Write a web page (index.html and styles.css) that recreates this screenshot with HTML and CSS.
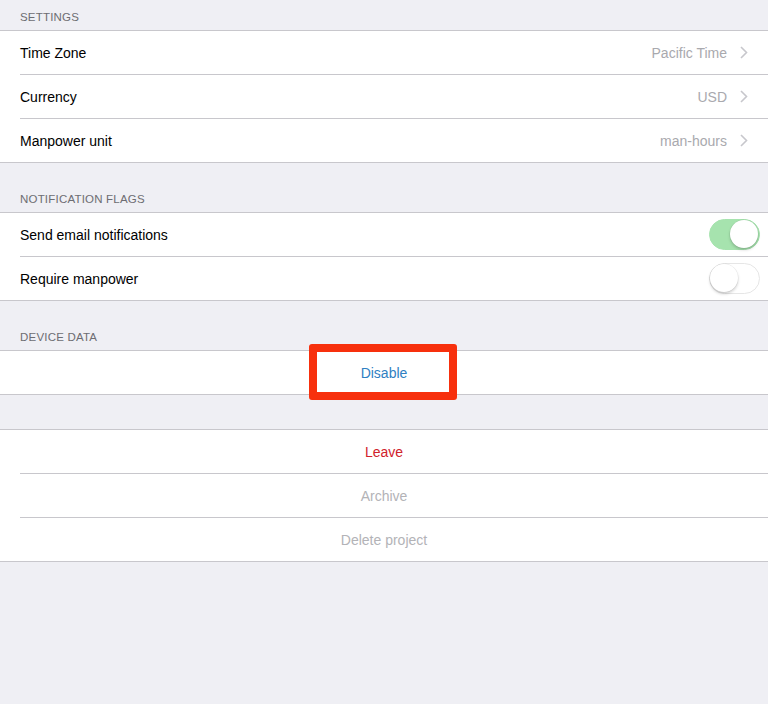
FILE: index.html
```html
<!DOCTYPE html>
<html>
<head>
<meta charset="utf-8">
<link rel="stylesheet" href="styles.css">
</head>
<body>
<div class="page">
  <div class="section-header first">Settings</div>
  <div class="group">
    <div class="row">
      <span class="label">Time Zone</span>
      <span class="detail">Pacific Time<svg class="chev" width="8" height="13" viewBox="0 0 8 13"><path d="M1 1l5.5 5.5L1 12" fill="none" stroke="#c7c7cc" stroke-width="1.6"/></svg></span>
    </div>
    <div class="sep"></div>
    <div class="row">
      <span class="label">Currency</span>
      <span class="detail">USD<svg class="chev" width="8" height="13" viewBox="0 0 8 13"><path d="M1 1l5.5 5.5L1 12" fill="none" stroke="#c7c7cc" stroke-width="1.6"/></svg></span>
    </div>
    <div class="sep"></div>
    <div class="row">
      <span class="label">Manpower unit</span>
      <span class="detail">man-hours<svg class="chev" width="8" height="13" viewBox="0 0 8 13"><path d="M1 1l5.5 5.5L1 12" fill="none" stroke="#c7c7cc" stroke-width="1.6"/></svg></span>
    </div>
  </div>

  <div class="section-header">Notification flags</div>
  <div class="group">
    <div class="row toggle-row">
      <span class="label">Send email notifications</span>
      <span class="switch on"><span class="knob"></span></span>
    </div>
    <div class="sep"></div>
    <div class="row toggle-row">
      <span class="label">Require manpower</span>
      <span class="switch"><span class="knob"></span></span>
    </div>
  </div>

  <div class="section-header">Device data</div>
  <div class="group">
    <div class="row center annotated">
      <span class="action blue">Disable</span>
      <span class="highlight"></span>
    </div>
  </div>

  <div class="spacer"></div>
  <div class="group">
    <div class="row center"><span class="action red">Leave</span></div>
    <div class="sep"></div>
    <div class="row center"><span class="action grey">Archive</span></div>
    <div class="sep"></div>
    <div class="row center"><span class="action grey">Delete project</span></div>
  </div>
</div>
</body>
</html>
```

FILE: styles.css
```css
html, body {
  margin: 0;
  padding: 0;
  background: #efeff4;
}
body {
  font-family: "Liberation Sans", Arial, sans-serif;
  width: 768px;
  height: 704px;
  overflow: hidden;
}
.page {
  display: flex;
  flex-direction: column;
}
.section-header {
  height: 30px;
  box-sizing: border-box;
  margin-top: 19px;
  padding: 0 20px 6px;
  display: flex;
  align-items: flex-end;
  font-size: 11.5px;
  letter-spacing: 0.2px;
  line-height: 13px;
  text-transform: uppercase;
  color: #6d6d72;
}
.section-header.first {
  margin-top: 0;
}
.group {
  background: #fff;
  border-top: 1px solid #c8c7cc;
  border-bottom: 1px solid #c8c7cc;
  display: flex;
  flex-direction: column;
}
.sep {
  height: 1px;
  margin-left: 20px;
  background: #c8c7cc;
}
.row {
  height: 43px;
  display: flex;
  align-items: center;
  justify-content: space-between;
  padding: 0 20px;
  font-size: 14px;
  color: #000;
}
.row.toggle-row {
  padding-right: 8px;
}
.row.center {
  justify-content: center;
}
.detail {
  display: flex;
  align-items: center;
  gap: 13px;
  color: #a9a9ae;
}
.chev {
  display: block;
}
.switch {
  position: relative;
  width: 51px;
  height: 31px;
  box-sizing: border-box;
  border-radius: 16px;
  border: 1.5px solid #e6e6e6;
  background: #fff;
}
.switch.on {
  background: #a6e3ae;
  border-color: #a6e3ae;
}
.knob {
  position: absolute;
  top: 0;
  left: 0;
  width: 28px;
  height: 28px;
  border-radius: 50%;
  background: #fff;
  box-shadow: 0 2px 3px rgba(0, 0, 0, 0.18), 0 0 0 0.5px rgba(0, 0, 0, 0.08);
}
.switch.on .knob {
  left: 20px;
}
.action {
  font-size: 14px;
}
.blue { color: #2f80c2; }
.red { color: #d0222b; }
.grey { color: #b3b3b7; }
.annotated {
  position: relative;
}
.highlight {
  position: absolute;
  left: calc(50% - 75px);
  top: -7px;
  width: 148px;
  height: 56px;
  box-sizing: border-box;
  border: 8px solid #f7300d;
  border-radius: 3px;
}
.spacer {
  height: 34px;
}
```
